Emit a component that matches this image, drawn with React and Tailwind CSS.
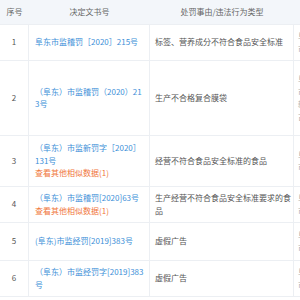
import React from "react";

const rows = [
  {
    no: "1",
    h: "h-[36px]",
    doc: ["阜东市监稽罚［2020］215号"],
    extra: false,
    reason: ["标签、营养成分不符合食品安全标准"],
    side: ["阜新", "市市"],
  },
  {
    no: "2",
    h: "h-[75px]",
    doc: ["（阜东）市监稽罚（2020）21", "3号"],
    extra: false,
    reason: ["生产不合格复合膜袋"],
    side: ["阜新", "市阜", "新蒙", "古族"],
  },
  {
    no: "3",
    h: "h-[51px]",
    doc: ["（阜东）市监新罚字［2020］", "131号"],
    extra: true,
    reason: ["经营不符合食品安全标准的食品"],
    side: ["阜新", "市市"],
  },
  {
    no: "4",
    h: "h-[36px]",
    doc: ["（阜东）市监稽罚[2020]63号"],
    extra: true,
    reason: ["生产经营不符合食品安全标准要求的食", "品"],
    side: ["阜新", "市市"],
  },
  {
    no: "5",
    h: "h-[38px]",
    doc: ["(阜东)市监经罚[2019]383号"],
    extra: false,
    reason: ["虚假广告"],
    side: ["阜新", "市市"],
  },
  {
    no: "6",
    h: "h-[36px]",
    doc: ["（阜东）市监经罚字[2019]383", "号"],
    extra: false,
    reason: ["虚假广告"],
    side: ["阜新", "市市"],
  },
];

function Row({ r }) {
  return (
    <div className={`flex ${r.h} border-b border-[#eceff3] bg-white`}>
      {/* 序号 */}
      <div className="w-[29px] shrink-0 border-r border-[#eceff3] flex items-center justify-center text-[#555]">
        {r.no}
      </div>

      {/* 决定文书号 */}
      <div className="w-[121px] shrink-0 border-r border-[#eceff3] flex flex-col justify-center pl-[6px]">
        {r.doc.map((t, i) => (
          <span key={i} className="whitespace-nowrap text-[#3d8fd8]">
            {t}
          </span>
        ))}
        {r.extra && (
          <span className="whitespace-nowrap text-[#f0763a]">查看其他相似数据(1)</span>
        )}
      </div>

      {/* 处罚事由 */}
      <div className="w-[144px] shrink-0 border-r border-[#eceff3] flex flex-col justify-center pl-[5px] text-[#555]">
        {r.reason.map((t, i) => (
          <span key={i} className="whitespace-nowrap">
            {t}
          </span>
        ))}
      </div>

      {/* next column, cut off by the viewport */}
      <div className="w-[80px] shrink-0 flex flex-col justify-center pl-[4px] text-[#aaa]">
        {r.side.map((t, i) => (
          <span key={i} className="whitespace-nowrap">
            {t}
          </span>
        ))}
      </div>
    </div>
  );
}

export default function App() {
  return (
    <div
      className="w-[300px] h-[300px] overflow-hidden bg-white text-[8px] leading-[12.5px]"
      style={{ fontFamily: '"Noto Sans CJK SC", "Noto Sans", sans-serif' }}
    >
      <div className="w-[380px]">
        {/* Header */}
        <div className="flex h-[25px] bg-[#f3f6fa] border-b border-[#eceff3] text-[#666]">
          <div className="w-[29px] shrink-0 flex items-center justify-center">序号</div>
          <div className="w-[121px] shrink-0 flex items-center justify-center">决定文书号</div>
          <div className="w-[144px] shrink-0 flex items-center justify-center">处罚事由/违法行为类型</div>
          <div className="w-[80px] shrink-0" />
        </div>

        {rows.map((r) => (
          <Row key={r.no} r={r} />
        ))}
      </div>
    </div>
  );
}
